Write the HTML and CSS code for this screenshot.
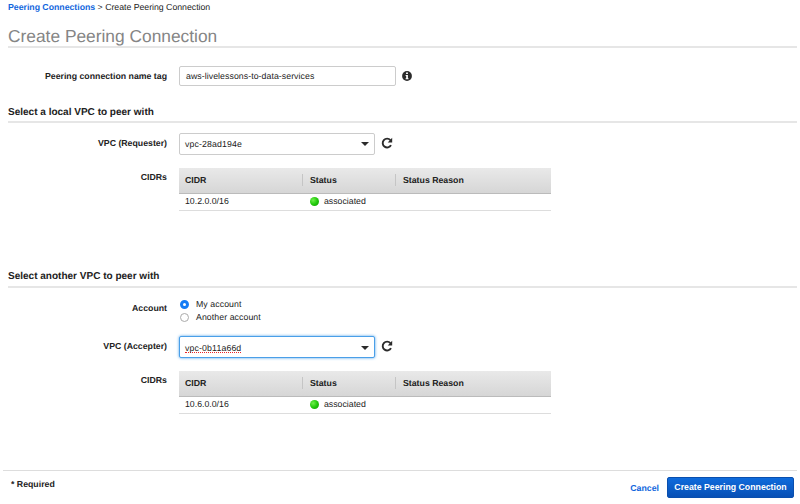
FILE: index.html
```html
<!DOCTYPE html>
<html lang="en">
<head>
<meta charset="utf-8">
<title>Create Peering Connection</title>
<link rel="stylesheet" href="styles.css">
</head>
<body>
<nav class="breadcrumb"><a href="#">Peering Connections</a> &gt; <span>Create Peering Connection</span></nav>
<h1>Create Peering Connection</h1>
<main>
  <div class="row name-row">
    <label class="label">Peering connection name tag</label>
    <div class="box input">aws-livelessons-to-data-services</div>
    <svg class="info" viewBox="0 0 10 10"><circle cx="5" cy="5" r="4.9" fill="#2b2b2b"/><path d="M4.1 1.5h1.8v1.4H4.1zM3.6 4h2.3v3.2h.6v1H3.6v-1h.6V5h-.6z" fill="#fff"/></svg>
  </div>

  <h2 class="local">Select a local VPC to peer with</h2>
  <div class="row select-row">
    <label class="label">VPC (Requester)</label>
    <div class="box select"><span>vpc-28ad194e</span><i class="caret"></i></div>
    <svg class="refresh" viewBox="0 0 12 12"><path d="M10 8.1A4.4 4.4 0 1 1 9.4 3.1" fill="none" stroke="#2b2b2b" stroke-width="1.9"/><path d="M11.2.8v4.6H6.7z" fill="#2b2b2b"/></svg>
  </div>
  <div class="row table-row">
    <span class="label">CIDRs</span>
    <div class="table">
      <div class="thead"><span>CIDR</span><span>Status</span><span>Status Reason</span></div>
      <div class="tr"><span>10.2.0.0/16</span><span class="status"><i class="dot"></i>associated</span><span></span></div>
    </div>
  </div>

  <h2 class="another">Select another VPC to peer with</h2>
  <div class="row account-row">
    <span class="label">Account</span>
    <div class="radios">
      <div class="option"><i class="radio checked"></i><span>My account</span></div>
      <div class="option"><i class="radio"></i><span>Another account</span></div>
    </div>
  </div>
  <div class="row select-row accepter">
    <label class="label">VPC (Accepter)</label>
    <div class="box select focused"><span class="misspelled">vpc-0b11a66d</span><i class="caret"></i></div>
    <svg class="refresh" viewBox="0 0 12 12"><path d="M10 8.1A4.4 4.4 0 1 1 9.4 3.1" fill="none" stroke="#2b2b2b" stroke-width="1.9"/><path d="M11.2.8v4.6H6.7z" fill="#2b2b2b"/></svg>
  </div>
  <div class="row table-row">
    <span class="label">CIDRs</span>
    <div class="table">
      <div class="thead"><span>CIDR</span><span>Status</span><span>Status Reason</span></div>
      <div class="tr"><span>10.6.0.0/16</span><span class="status"><i class="dot"></i>associated</span><span></span></div>
    </div>
  </div>
</main>
<footer>
  <span class="required">* Required</span>
  <a class="cancel" href="#">Cancel</a>
  <button>Create Peering Connection</button>
</footer>
</body>
</html>
```
FILE: styles.css
```css
* { box-sizing: border-box; }
body {
  margin: 0;
  height: 504px;
  overflow: hidden;
  display: flex;
  flex-direction: column;
  background: #fff;
  color: #222;
  font: 8.75px/12px "Liberation Sans", Arial, sans-serif;
  text-rendering: geometricPrecision;
}
a { color: #1166dd; font-weight: bold; text-decoration: none; }
.breadcrumb { height: 24px; padding: 1px 8px 0; white-space: nowrap; }
.breadcrumb a, .breadcrumb span { letter-spacing: -.02px; }
h1 {
  margin: 0 3px 0 8px;
  height: 24px;
  border-bottom: 2px solid #e6e6e6;
  color: #858585;
  font-size: 17.35px;
  font-weight: normal;
  line-height: 24px;
}
main { height: 422px; }
.row { display: flex; }
.label {
  width: 167px;
  margin-right: 12px;
  text-align: right;
  font-weight: bold;
  white-space: nowrap;
}
.box {
  display: flex;
  align-items: center;
  border: 1px solid #ccc;
  border-radius: 2px;
  background: #fff;
  letter-spacing: .06px;
}
.name-row { padding-top: 18px; align-items: center; }
.input { width: 217px; height: 20px; padding-left: 6px; }
.info { width: 10px; height: 10px; margin-left: 6px; }
h2 {
  margin: 0 3px 0 8px;
  border-bottom: 2px solid #e6e6e6;
  font-size: 10.03px;
  line-height: 14px;
  height: 18px;
}
.local { margin-top: 19px; padding-top: 1px; }
.select-row { padding-top: 10px; }
.select-row .label { padding-top: 4px; }
.select {
  width: 196px;
  height: 22px;
  padding: 0 5px;
  justify-content: space-between;
  letter-spacing: .13px;
}
.focused { border-color: #4a9fe8; box-shadow: 0 0 3px #4a9fe8; }
.misspelled { height: 11px; border-bottom: 1px dotted #e8262a; }
.caret { border: 4px solid transparent; border-top-color: #2b2b2b; border-bottom: 0; }
.refresh { width: 12px; height: 12px; margin: 4px 0 0 6px; }
.table-row { padding-top: 13px; }
.table-row .label { padding-top: 3px; }
.table { width: 372px; }
.thead, .tr { display: grid; grid-template-columns: 123px 93px 1fr; align-items: center; }
.thead {
  height: 26px;
  padding-bottom: 1px;
  border-bottom: 1px solid #bbb;
  background: linear-gradient(#e9e9e9, #d6d6d6);
  font-weight: bold;
}
.thead span, .tr span { padding-left: 6px; }
.thead span + span { padding-left: 7px; border-left: 1px solid #c5c5c5; }
.tr { height: 17px; padding-bottom: 2px; border-bottom: 1px solid #ddd; }
.tr .status { display: flex; align-items: center; padding-left: 8px; }
.dot {
  width: 9px;
  height: 9px;
  margin-right: 5px;
  border-radius: 50%;
  background: radial-gradient(circle at 35% 35%, #6ef04a, #22c90c 50%, #119900);
}
.another { margin-top: 59px; }
.account-row { padding-top: 10px; }
.account-row .label { padding-top: 4px; }
.option { display: flex; align-items: center; height: 13px; }
.option span { padding-bottom: 1px; letter-spacing: .07px; }
.radio {
  width: 9px;
  height: 9px;
  margin: 0 7px 0 1px;
  border: 1px solid #aaa;
  border-radius: 50%;
}
.checked { border: 3px solid #147cf5; }
.accepter { padding-top: 12px; }
.accepter .select { padding-top: 1px; }
footer {
  display: flex;
  height: 34px;
  margin: 0 3px;
  padding-right: 3px;
  border-top: 1px solid #ddd;
}
.required { margin: 7px auto 0 8px; font-weight: bold; }
.cancel { margin: 11px 8px 0 0; }
button {
  width: 127px;
  height: 21px;
  margin-top: 6px;
  padding: 0;
  border: 1px solid #0a4fae;
  border-radius: 2px;
  background: linear-gradient(#0f6bdc, #0850b5);
  color: #fff;
  font: bold 8.75px/19px "Liberation Sans", Arial, sans-serif;
}
```
